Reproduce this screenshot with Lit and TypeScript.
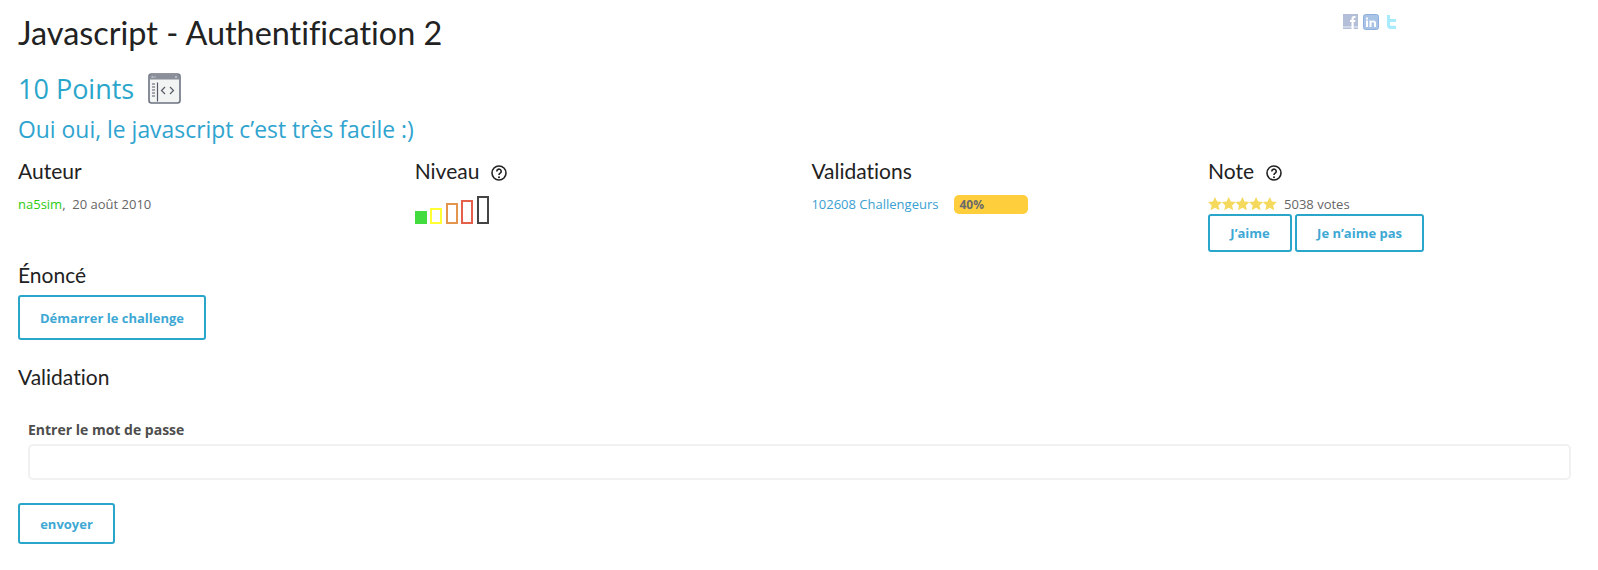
import { LitElement, html, css, svg } from "lit";
import { customElement } from "lit/decorators.js";

const help = html`<svg class="help" width="16" height="16" viewBox="0 0 16 16"><circle cx="8" cy="8" r="7" fill="none" stroke="#222" stroke-width="1.6"/><path d="M5.8 6.400a2.200 2.200 0 1 1 3.400 1.800c-.8.5-1.200.9-1.200 1.800" fill="none" stroke="#222" stroke-width="1.6"/><circle cx="8" cy="12.200" r="1" fill="#222"/></svg>`;
const star = svg`<path d="M7 0l2.100 4.500 4.900.6-3.600 3.300 1 4.800L7 10.800l-4.400 2.400 1-4.800L0 5.100l4.900-.6z" fill="#f5d95c"/>`;

@customElement("app-root")
export class AppRoot extends LitElement {
  static styles = css`
    :host { display: block; box-sizing: border-box; width: 1598px; height: 570px; padding: 0 27px 0 18px; background: #fff; font-family: "Open Sans", sans-serif; font-size: 13px; color: #666; overflow: hidden; }
    * { box-sizing: border-box; }
    .top { display: flex; justify-content: space-between; height: 66px; }
    h1 { margin: 13px 0 0; font: 400 32.400px/40px "Lato", sans-serif; font-variant-ligatures: none; color: #222; }
    .social { display: flex; gap: 5px; margin: 14px 172px 0 0; height: 16px; }
    .points { display: flex; align-items: center; gap: 14px; height: 44px; font-size: 27px; color: #2ba6cb; }
    h2 { margin: 0; height: 40px; font: 400 22.900px/40px "Open Sans", sans-serif; color: #2fa4cf; }
    .cols { display: grid; grid-template-columns: repeat(4, 396.7px); margin-top: 6px; height: 96px; }
    h3 { margin: 0; display: flex; align-items: center; gap: 12px; height: 30px; font: 400 21px/30px "Lato", sans-serif; font-variant-ligatures: none; color: #222; }
    .help { margin-top: 3px; }
    .line { margin-top: 8px; line-height: 20px; display: flex; align-items: center; }
    .green { color: #2ccb12; }
    .sep { white-space: pre; }
    .bars { display: flex; align-items: flex-end; gap: 3.500px; margin-top: 10px; height: 28px; }
    .bar { width: 12px; border: 2px solid; }
    .link { color: #3a9fd0; }
    .pct { margin-left: 16px; width: 74px; height: 19px; border-radius: 5px; background: #ffce3d; color: #6b6b6b; font-weight: 700; font-size: 12px; line-height: 19px; padding-left: 5px; }
    .stars { display: block; margin-right: 7px; }
    .note .line { margin-top: 9px; height: 18px; }
    .btns { display: flex; gap: 3px; margin-top: 1px; }
    .btn { display: inline-flex; align-items: center; justify-content: center; border: 2px solid #2ba6cb; border-radius: 3px; background: #fff; color: #3ea8d4; font: 700 13px "Open Sans", sans-serif; padding: 0; }
    .b-like { width: 84px; height: 38px; }
    .b-dislike { width: 129px; height: 38px; }
    .b-start { width: 188px; height: 45px; display: flex; }
    .b-send { width: 97px; height: 41px; display: flex; margin-top: 23px; }
    .h-enonce { margin-top: 3px; height: 40px; }
    .h-valid { margin-top: 20px; height: 34px; }
    .form { padding: 26px 0 0 10px; }
    label { display: block; font-weight: 700; font-size: 14px; line-height: 20px; color: #4d4d4d; }
    input { display: block; width: 100%; height: 36px; margin-top: 4px; border: 2px solid #f1f1f1; border-radius: 5px; background: #fff; outline: none; }
  `;

  render() {
    return html`
      <div class="top">
        <h1>Javascript - Authentification 2</h1>
        <div class="social">
          <svg width="15" height="15" viewBox="0 0 15 15"><rect width="15" height="15" fill="#b3bfd9"/><rect y="12" width="15" height="2" fill="#d0d8e8"/><path d="M8.500 15V8H7V6h1.500V4.500C8.500 3 9.500 2 11 2h1.500v2H11.500c-.5 0-.8.300-.8.800V6h1.800l-.3 2h-1.500v7z" fill="#fff"/></svg>
          <svg width="16" height="16" viewBox="0 0 16 16"><rect x=".5" y=".5" width="15" height="15" rx="2" fill="#a9c3e6" stroke="#8fb0dc"/><path d="M3 6.500h2V13H3zM3 3.500h2v2H3zM6.500 6.500h2v1c.5-.8 1.200-1.100 2-1.100 1.500 0 2.500 1 2.500 2.800V13h-2V9.500c0-.8-.4-1.300-1.100-1.300S8.500 8.700 8.500 9.500V13h-2z" fill="#fff"/></svg>
          <svg width="15" height="16" viewBox="0 0 15 16"><path d="M3 1h3v4h6v3H6v2.500c0 .8.500 1.200 1.200 1.200H12V15H6.500C4.300 15 3 13.500 3 11.500z" fill="#a8ebfb"/></svg>
        </div>
      </div>
      <div class="points">
        <span>10 Points</span>
        <svg width="33" height="31" viewBox="0 0 33 31">
          <rect x="1" y="1" width="31" height="29" rx="2.500" fill="#f2f3f3" stroke="#6b7280" stroke-width="1.600"/>
          <rect x="1.500" y="1.500" width="30" height="5" fill="#8a8f99"/>
          <path d="M3.500 4h2M6.500 4h1M27 4h2" stroke="#e8e8e8" stroke-width="1"/>
          <path d="M9.500 9.500v19" stroke="#555b66" stroke-width="1.200"/>
          <path d="M4 11h3M4 14h3M4 17h3M4 20h3M4 23h3" stroke="#555b66" stroke-width="1.200"/>
          <path d="M17 14l-3.500 3.500L17 21M22 14l3.500 3.500L22 21" fill="none" stroke="#555b66" stroke-width="1.200"/>
        </svg>
      </div>
      <h2>Oui oui, le javascript c’est très facile :)</h2>
      <div class="cols">
        <div>
          <h3>Auteur</h3>
          <div class="line"><span class="green">na5sim</span><span class="sep">,  20 août 2010</span></div>
        </div>
        <div>
          <h3>Niveau ${help}</h3>
          <div class="bars">
            <div class="bar" style="height:13px;border-color:#42dc3e;background:#42dc3e"></div>
            <div class="bar" style="height:16px;border-color:#ffff33"></div>
            <div class="bar" style="height:21px;border-color:#e4954d"></div>
            <div class="bar" style="height:24px;border-color:#e5604a"></div>
            <div class="bar" style="height:28px;border-color:#444"></div>
          </div>
        </div>
        <div>
          <h3>Validations</h3>
          <div class="line"><span class="link">102608 Challengeurs</span><div class="pct">40%</div></div>
        </div>
        <div class="note">
          <h3>Note ${help}</h3>
          <div class="line">
            <svg class="stars" width="69" height="14" viewBox="0 0 69 14">
              ${[0, 13.7, 27.4, 41.1, 54.8].map((x) => svg`<g transform="translate(${x} 0)">${star}</g>`)}
            </svg>
            <span>5038 votes</span>
          </div>
          <div class="btns">
            <button class="btn b-like">J’aime</button>
            <button class="btn b-dislike">Je n’aime pas</button>
          </div>
        </div>
      </div>
      <h3 class="h-enonce">Énoncé</h3>
      <button class="btn b-start">Démarrer le challenge</button>
      <h3 class="h-valid">Validation</h3>
      <div class="form">
        <label>Entrer le mot de passe</label>
        <input type="text" />
      </div>
      <button class="btn b-send">envoyer</button>
    `;
  }
}
